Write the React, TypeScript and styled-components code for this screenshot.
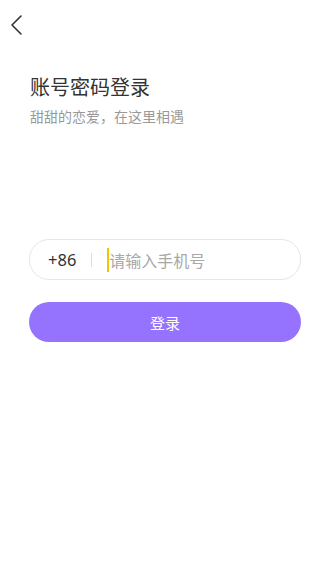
import React from "react";
import styled, { createGlobalStyle } from "styled-components";

const Global = createGlobalStyle`
  html, body { margin: 0; padding: 0; background: #fff; }
  body { font-family: "Noto Sans CJK SC", "Noto Sans", sans-serif; }
`;

const Page = styled.div`
  width: 320px;
  height: 581px;
  display: flex;
  flex-direction: column;
  background: #fff;
`;

const TopBar = styled.div`
  height: 48px;
  display: flex;
  align-items: flex-start;
  padding: 14px 0 0 9px;
  box-sizing: border-box;
`;

const Back = styled.button`
  border: 0;
  background: none;
  padding: 0;
  width: 16px;
  height: 22px;
  display: flex;
`;

const Header = styled.div`
  padding: 24px 29px 0 30px;
  display: flex;
  flex-direction: column;
`;

const Title = styled.h1`
  margin: 0;
  font-size: 20px;
  line-height: 30px;
  font-weight: 400;
  color: #333;
`;

const Subtitle = styled.p`
  margin: 4px 0 0;
  font-size: 14px;
  line-height: 20px;
  color: #999;
`;

const Form = styled.div`
  margin-top: 113px;
  padding: 0 19px 0 29px;
  display: flex;
  flex-direction: column;
  gap: 22px;
`;

const Field = styled.div`
  height: 41px;
  border: 1px solid #e6e6e6;
  border-radius: 20px;
  display: flex;
  align-items: center;
  box-sizing: border-box;
  padding-left: 18px;
`;

const Code = styled.span`
  font-size: 16.5px;
  color: #333;
  font-family: "Noto Sans", sans-serif;
`;

const Divider = styled.span`
  width: 1px;
  height: 14px;
  background: #ddd;
  margin: 0 15px 0 15px;
`;

const Caret = styled.span`
  width: 2px;
  height: 24px;
  background: #f5c400;
`;

const Placeholder = styled.span`
  font-size: 16px;
  color: #a8a8a8;
`;

const Submit = styled.button`
  height: 40px;
  border: 0;
  border-radius: 20px;
  background: #9673fe;
  color: #fff;
  font-size: 15px;
  font-family: "Noto Sans CJK SC", sans-serif;
  display: flex;
  align-items: center;
  justify-content: center;
`;

export default function App() {
  return (
    <>
      <Global />
      <Page>
        <TopBar>
          <Back aria-label="back">
            <svg width="16" height="22" viewBox="0 0 16 22">
              <path d="M12 2 L3 11 L12 20" fill="none" stroke="#333" strokeWidth="1.6" strokeLinecap="round" strokeLinejoin="round" />
            </svg>
          </Back>
        </TopBar>
        <Header>
          <Title>账号密码登录</Title>
          <Subtitle>甜甜的恋爱，在这里相遇</Subtitle>
        </Header>
        <Form>
          <Field>
            <Code>+86</Code>
            <Divider />
            <Caret />
            <Placeholder>请输入手机号</Placeholder>
          </Field>
          <Submit>登录</Submit>
        </Form>
      </Page>
    </>
  );
}
